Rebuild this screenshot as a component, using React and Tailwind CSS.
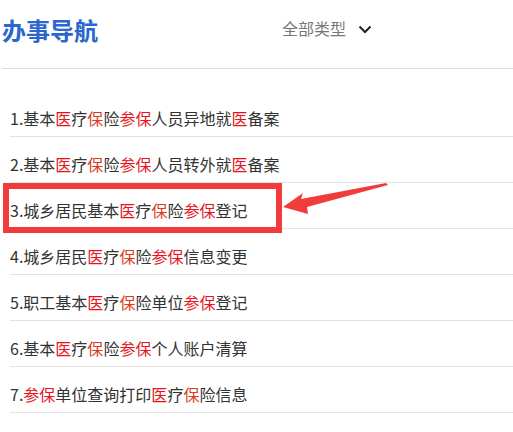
import React from "react";

const R = ({ c }) => <span className="text-[#e8141c]">{c}</span>;
const B = ({ c }) => <span className="text-[#dc3a1e]">{c}</span>;

const items = [
  ["1.基本", <R c="医" />, "疗", <B c="保" />, "险", <R c="参保" />, "人员异地就", <R c="医" />, "备案"],
  ["2.基本", <R c="医" />, "疗", <B c="保" />, "险", <R c="参保" />, "人员转外就", <R c="医" />, "备案"],
  ["3.城乡居民基本", <R c="医" />, "疗", <B c="保" />, "险", <R c="参保" />, "登记"],
  ["4.城乡居民", <R c="医" />, "疗", <B c="保" />, "险", <R c="参保" />, "信息变更"],
  ["5.职工基本", <R c="医" />, "疗", <B c="保" />, "险单位", <R c="参保" />, "登记"],
  ["6.基本", <R c="医" />, "疗", <B c="保" />, "险", <R c="参保" />, "个人账户清算"],
  ["7.", <R c="参保" />, "单位查询打印", <R c="医" />, "疗", <B c="保" />, "险信息"],
];

export default function App() {
  return (
    <div
      className="relative w-[513px] h-[432px] bg-white overflow-hidden"
      style={{ fontFamily: '"Noto Sans CJK SC", "Noto Sans", sans-serif' }}
    >
      <div className="ml-[2px] h-[69px] border-b border-[#d9dde9] flex items-center">
        <div className="text-[24px] font-bold text-[#2a66cc] leading-none tracking-[0px] -mt-[8px]">办事导航</div>
        <div className="ml-[184px] flex items-center -mt-[12px]">
          <span className="text-[16px] text-[#777777] leading-none">全部类型</span>
          <svg className="ml-[12px] mt-[2px]" width="14" height="9" viewBox="0 0 14 9">
            <polyline points="1.5,1.5 7,7 12.5,1.5" fill="none" stroke="#222" strokeWidth="2" />
          </svg>
        </div>
      </div>
      <ul className="mt-[22px] ml-[10px]">
        {items.map((parts, i) => (
          <li
            key={i}
            className="h-[46px] box-border border-b border-[#e3e3e3] pt-[15px] text-[16px] leading-6 text-[#333333]"
          >
            {parts.map((p, j) => (
              <React.Fragment key={j}>{p}</React.Fragment>
            ))}
          </li>
        ))}
      </ul>
      <div className="absolute left-[3px] top-[183px] w-[279px] h-[50px] border-[6px] border-[#f23b3b]" />
      <svg className="absolute left-0 top-0" width="513" height="432" viewBox="0 0 513 432">
        <polygon
          points="283,207 303,193 301,199 386,183 388,185 307,207 308,214"
          fill="#f23b3b"
        />
      </svg>
    </div>
  );
}
